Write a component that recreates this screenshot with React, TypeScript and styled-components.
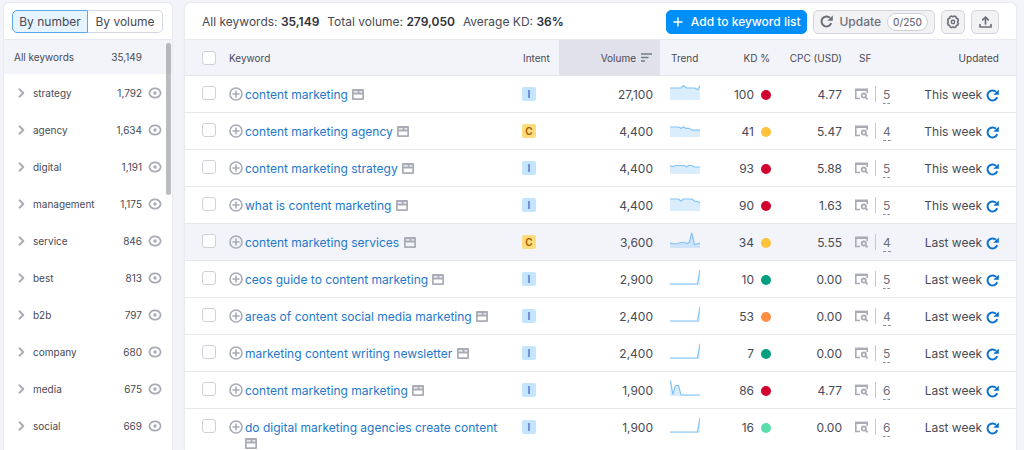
import React from "react";
import styled, { createGlobalStyle } from "styled-components";

const GlobalStyle = createGlobalStyle`
  *, *::before, *::after { box-sizing: border-box; }
  body {
    margin: 0;
    background: #f3f4f9;
    color: #484a54;
    font-family: Inter, "Liberation Sans", sans-serif;
    font-size: 12px;
    line-height: 16px;
  }
  button { font: inherit; color: inherit; cursor: pointer; }
`;

const Page = styled.div`
  display: flex;
  gap: 13px;
  height: 100vh;
  padding: 3px 8px 0 4px;
  overflow: hidden;
`;

const Panel = styled.div`
  background: #fff;
  border-radius: 5px 5px 0 0;
  box-shadow: 0 0 2px rgba(25, 27, 60, 0.16);
  overflow: hidden;
`;

const Sidebar = styled(Panel).attrs({ as: "aside" })`
  position: relative;
  flex: 0 0 168px;
  font-size: 10px;
`;

const Main = styled(Panel).attrs({ as: "main" })`
  flex: 1;
  min-width: 0;
`;

const SwitchBar = styled.div`
  display: flex;
  height: 37px;
  padding: 7px 9px 6px 8px;
  border-bottom: 1px solid #e9eaf1;
`;

const SwitchButton = styled.button<{ $active?: boolean }>`
  flex: 1;
  padding: 0;
  font-size: 12px;
  white-space: nowrap;
  background: ${(p) => (p.$active ? "#e6f4ff" : "#fff")};
  border: 1px solid ${(p) => (p.$active ? "#5aa7ea" : "#d5d7e0")};
  border-radius: ${(p) => (p.$active ? "5px 0 0 5px" : "0 5px 5px 0")};
  ${(p) => !p.$active && "border-left: 0;"}
`;

const GroupTotal = styled.div`
  display: flex;
  justify-content: space-between;
  align-items: center;
  height: 34px;
  padding: 0 30px 0 10px;
  background: #f3f4f9;
`;

const GroupList = styled.ul`
  margin: 0;
  padding: 0;
  list-style: none;
`;

const GroupRow = styled.li`
  display: flex;
  align-items: center;
  height: 37px;
  padding: 0 10px 0 14px;
`;

const GroupName = styled.span`
  flex: 1;
  margin-left: 8px;
`;

const IconButton = styled.button`
  display: inline-flex;
  flex: none;
  padding: 0;
  color: #a9abb6;
  background: none;
  border: 0;
`;

const EyeButton = styled(IconButton)`
  margin-left: 6px;
`;

const RefreshButton = styled(IconButton)`
  color: #0c72d0;
`;

const ScrollThumb = styled.div`
  position: absolute;
  top: 40px;
  right: 1px;
  width: 5px;
  height: 152px;
  border-radius: 3px;
  background: rgba(120, 121, 128, 0.5);
`;

const Toolbar = styled.div`
  display: flex;
  align-items: center;
  height: 37px;
  padding: 1px 17px 0;
  border-bottom: 1px solid #e9eaf1;
`;

const Stats = styled.div`
  display: flex;
  flex: 1;
  gap: 8px;
  white-space: nowrap;
  strong { font-weight: 600; color: #2f3038; }
`;

const Actions = styled.div`
  display: flex;
  gap: 6px;
`;

const ToolButton = styled.button<{ $primary?: boolean }>`
  display: flex;
  align-items: center;
  gap: ${(p) => (p.$primary ? 8 : 6)}px;
  height: 24px;
  padding: 0 6px;
  font-weight: 500;
  white-space: nowrap;
  color: ${(p) => (p.$primary ? "#fff" : "#6d6f7b")};
  background: ${(p) => (p.$primary ? "#008ff8" : "#f2f2f4")};
  border: 1px solid ${(p) => (p.$primary ? "#008ff8" : "#d2d4dc")};
  border-radius: 5px;
`;

const SquareButton = styled(ToolButton)<{ $wide?: boolean }>`
  justify-content: center;
  width: ${(p) => (p.$wide ? 28 : 24)}px;
  padding: 0;
`;

const Quota = styled.span`
  padding: 0 5px;
  font-size: 10px;
  background: #fff;
  border: 1px solid #cfd1da;
  border-radius: 9px;
`;

const Table = styled.table`
  width: 100%;
  table-layout: fixed;
  border-collapse: separate;
  border-spacing: 0;
`;

const Col = styled.col<{ $w?: number }>`
  ${(p) => p.$w && `width: ${p.$w}px;`}
`;

type CellProps = { $right?: boolean; $left?: number; $end?: number; $sorted?: boolean };

const Th = styled.th<CellProps>`
  height: 36px;
  padding: 0 ${(p) => p.$end ?? 8}px 0 ${(p) => p.$left ?? 8}px;
  font-size: 10px;
  font-weight: 400;
  white-space: nowrap;
  text-align: ${(p) => (p.$right ? "right" : "left")};
  background: ${(p) => (p.$sorted ? "#e0e1ea" : "#f3f4f9")};
  border-bottom: 1px solid #e3e4ec;
`;

const Td = styled.td<CellProps>`
  height: 37px;
  padding: 11px ${(p) => p.$end ?? 8}px 9px ${(p) => p.$left ?? 8}px;
  vertical-align: top;
  text-align: ${(p) => (p.$right ? "right" : "left")};
  border-bottom: 1px solid #e6e7ef;
`;

const CheckTd = styled(Td)`
  padding-top: 10px;
`;

const TightTd = styled(Td)`
  padding-top: 8px;
  padding-bottom: 8px;
`;

const Row = styled.tr<{ $hover?: boolean }>`
  background: ${(p) => (p.$hover ? "#f3f4f9" : "#fff")};
`;

const Checkbox = styled.input.attrs({ type: "checkbox" })`
  display: block;
  appearance: none;
  width: 14px;
  height: 14px;
  margin: 0;
  background: #fff;
  border: 1px solid #cfd0da;
  border-radius: 3px;
`;

const KeywordCell = styled.div`
  display: flex;
  align-items: flex-start;
  gap: 2px;
`;

const Keyword = styled.div`
  flex: 1;
  svg { display: inline-block; vertical-align: -1px; color: #a9abb6; }
`;

const KeywordLink = styled.a`
  margin-right: 1px;
  color: #2478cc;
  text-decoration: none;
`;

const Intent = styled.span<{ $kind: string }>`
  display: block;
  width: 14px;
  height: 14px;
  font-size: 10px;
  font-weight: 600;
  line-height: 14px;
  text-align: center;
  border-radius: 2px;
  color: ${(p) => (p.$kind === "C" ? "#a75800" : "#2b7bd0")};
  background: ${(p) => (p.$kind === "C" ? "#fcdc7c" : "#c4e5fe")};
`;

const Inline = styled.div<{ $gap: number; $end?: boolean }>`
  display: flex;
  align-items: center;
  justify-content: ${(p) => (p.$end ? "flex-end" : "flex-start")};
  gap: ${(p) => p.$gap}px;
  white-space: nowrap;
`;

const Dot = styled.span<{ $color: string }>`
  width: 10px;
  height: 10px;
  border-radius: 50%;
  background: ${(p) => p.$color};
`;

const Divider = styled.span`
  width: 1px;
  height: 16px;
  background: #c4c7cf;
`;

const Features = styled.a`
  height: 20px;
  line-height: 22px;
  color: #6c6e79;
  text-decoration: none;
  border-bottom: 1px dashed #8a8e9b;
`;

const Chart = styled.svg`
  display: block;
`;

const Chevron = () => (
  <svg width="7" height="10" viewBox="0 0 7 10" fill="none" stroke="currentColor" strokeWidth="1.9" strokeLinecap="round" strokeLinejoin="round">
    <path d="M1.5 1.3 5.3 5 1.5 8.7" />
  </svg>
);

const Eye = () => (
  <svg width="14" height="12" viewBox="0 0 14 12" fill="none" stroke="currentColor" strokeWidth="1.7">
    <path d="M1.3 6C2 3 4.1 1.4 7 1.4S12 3 12.7 6c-.7 3-2.8 4.6-5.7 4.6S2 9 1.3 6Z" />
    <circle cx="7" cy="6" r="1.7" fill="currentColor" stroke="none" />
  </svg>
);

const PlusCircle = () => (
  <svg width="14" height="14" viewBox="0 0 14 14" fill="none" stroke="currentColor" strokeWidth="1.6">
    <circle cx="7" cy="7" r="6" />
    <path d="M7 4v6M4 7h6" strokeLinecap="round" />
  </svg>
);

const PageIcon = () => (
  <svg width="12" height="11" viewBox="0 0 12 11" fill="currentColor" fillRule="evenodd">
    <path d="M1 0h10a1 1 0 0 1 1 1v9a1 1 0 0 1-1 1H1a1 1 0 0 1-1-1V1a1 1 0 0 1 1-1ZM1.700 5.500v3.800h8.600V5.500ZM1.700 2.200v1.300h4V2.200ZM7.500 2.200v1.300h2.800V2.200Z" />
  </svg>
);

const SerpIcon = () => (
  <svg width="13" height="12" viewBox="0 0 13 12" fill="none" stroke="currentColor">
    <path d="M0 1.8h13" strokeWidth="2.4" />
    <path d="M.8 2v8.500H5M12.200 2v3" strokeWidth="1.6" />
    <circle cx="8.8" cy="7.6" r="2.1" strokeWidth="1.8" />
    <path d="m10.4 9.2 2.2 2.2" strokeWidth="1.8" />
  </svg>
);

const Refresh = () => (
  <svg width="13" height="13" viewBox="0 0 13 13" fill="none" stroke="currentColor" strokeWidth="2">
    <path d="M11.2 8.2A5 5 0 1 1 10 2.8" />
    <path d="M12.8.4v5.4H7.3Z" fill="currentColor" stroke="none" />
  </svg>
);

const Plus = () => (
  <svg width="10" height="10" viewBox="0 0 10 10" fill="none" stroke="currentColor" strokeWidth="1.4" strokeLinecap="round">
    <path d="M5 1v8M1 5h8" />
  </svg>
);

const Gear = () => (
  <svg width="14" height="14" viewBox="0 0 14 14" fill="none" stroke="currentColor" strokeWidth="1.6" strokeLinejoin="round">
    <path d="m5.7 1.1 1.3.7 1.3-.7 1.6.7.4 1.4 1.4.4.7 1.6-.7 1.3v1l.7 1.2-.7 1.4-1.4.4-.4 1.4-1.6.7-1.3-.7-1.3.7-1.6-.7-.4-1.4-1.4-.4-.7-1.6.7-1.3V6.5l-.7-1.3.7-1.6 1.4-.4.4-1.4Z" />
    <circle cx="7" cy="7" r="1.7" strokeWidth="1.4" />
  </svg>
);

const Export = () => (
  <svg width="13" height="12" viewBox="0 0 13 12" fill="none" stroke="currentColor" strokeWidth="1.7" strokeLinecap="round" strokeLinejoin="round">
    <path d="M6.5 8V1.2M3.7 3.8 6.5 1l2.8 2.8M1 8.5V11h11V8.5" />
  </svg>
);

const SortIcon = () => (
  <svg width="11" height="9" viewBox="0 0 11 9" fill="none" stroke="#6d7c85" strokeWidth="1.6">
    <path d="M0 1h11M0 4.5h7.5M0 8h4" />
  </svg>
);

const TrendChart = ({ points }: { points: string }) => (
  <Chart width="30" height="18" viewBox="0 0 30 18" role="img" aria-label="Trend">
    <polygon points={`0,16 ${points} 30,16`} fill="#2f9df4" fillOpacity="0.18" />
    <polyline points={points} fill="none" stroke="#83c3f6" strokeWidth="1.2" />
  </Chart>
);

const spike = "0,15 27.5,15 30,0.5";

const groups: [string, string][] = [
  ["strategy", "1,792"],
  ["agency", "1,634"],
  ["digital", "1,191"],
  ["management", "1,175"],
  ["service", "846"],
  ["best", "813"],
  ["b2b", "797"],
  ["company", "680"],
  ["media", "675"],
  ["social", "669"],
];

const RED = "#d1002f";
const YELLOW = "#fdc23c";
const GREEN = "#009f81";
const ORANGE = "#ff8c43";
const MINT = "#59ddaa";

type KeywordRow = {
  keyword: string;
  intent: string;
  volume: string;
  trend: string;
  kd: number;
  color: string;
  cpc: string;
  sf: number;
  updated: string;
  hover?: boolean;
};

const rows: KeywordRow[] = [
  { keyword: "content marketing", intent: "I", volume: "27,100", trend: "0,4 11,4 13.5,1.5 16.5,4 25,4 27.5,5.7 30,1.5", kd: 100, color: RED, cpc: "4.77", sf: 5, updated: "This week" },
  { keyword: "content marketing agency", intent: "C", volume: "4,400", trend: "0,6 8.5,6 11,7.3 13.5,6 16,7.3 19,7.3 22,9.2 30,9.2", kd: 41, color: YELLOW, cpc: "5.47", sf: 4, updated: "This week" },
  { keyword: "content marketing strategy", intent: "I", volume: "4,400", trend: "0,7.8 3,8.5 5.5,7.5 14,7.5 16.5,8.8 19,7.5 22,7.5 24.5,9 30,9", kd: 93, color: RED, cpc: "5.88", sf: 5, updated: "This week" },
  { keyword: "what is content marketing", intent: "I", volume: "4,400", trend: "0,4 8.5,4 11,6 13.5,4 22,4 24.5,6 27.5,6.5 30,8", kd: 90, color: RED, cpc: "1.63", sf: 5, updated: "This week" },
  { keyword: "content marketing services", intent: "C", volume: "3,600", trend: "0,11.2 5.5,12 11,10.5 14,10.5 17,11.5 19.5,10 21.8,1 24.5,12.5 30,11.2", kd: 34, color: YELLOW, cpc: "5.55", sf: 4, updated: "Last week", hover: true },
  { keyword: "ceos guide to content marketing", intent: "I", volume: "2,900", trend: spike, kd: 10, color: GREEN, cpc: "0.00", sf: 5, updated: "Last week" },
  { keyword: "areas of content social media marketing", intent: "I", volume: "2,400", trend: spike, kd: 53, color: ORANGE, cpc: "0.00", sf: 4, updated: "Last week" },
  { keyword: "marketing content writing newsletter", intent: "I", volume: "2,400", trend: spike, kd: 7, color: GREEN, cpc: "0.00", sf: 5, updated: "Last week" },
  { keyword: "content marketing marketing", intent: "I", volume: "1,900", trend: "0.5,0.5 2.8,14.5 5.5,5.5 8.5,5.5 11,14.8 30,15", kd: 86, color: RED, cpc: "4.77", sf: 6, updated: "Last week" },
  { keyword: "do digital marketing agencies create content", intent: "I", volume: "1,900", trend: spike, kd: 16, color: MINT, cpc: "0.00", sf: 6, updated: "Last week" },
];

export default function App() {
  return (
    <>
      <GlobalStyle />
      <Page>
        <Sidebar>
          <SwitchBar>
            <SwitchButton $active>By number</SwitchButton>
            <SwitchButton>By volume</SwitchButton>
          </SwitchBar>
          <GroupTotal>
            <span>All keywords</span>
            <span>35,149</span>
          </GroupTotal>
          <GroupList>
            {groups.map(([name, count]) => (
              <GroupRow key={name}>
                <IconButton aria-label={`Expand ${name}`}><Chevron /></IconButton>
                <GroupName>{name}</GroupName>
                <span>{count}</span>
                <EyeButton aria-label={`Hide ${name}`}><Eye /></EyeButton>
              </GroupRow>
            ))}
          </GroupList>
          <ScrollThumb />
        </Sidebar>
        <Main>
          <Toolbar>
            <Stats>
              <span>All keywords: <strong>35,149</strong></span>
              <span>Total volume: <strong>279,050</strong></span>
              <span>Average KD: <strong>36%</strong></span>
            </Stats>
            <Actions>
              <ToolButton $primary><Plus />Add to keyword list</ToolButton>
              <ToolButton><Refresh />Update<Quota>0/250</Quota></ToolButton>
              <SquareButton aria-label="Settings"><Gear /></SquareButton>
              <SquareButton $wide aria-label="Export"><Export /></SquareButton>
            </Actions>
          </Toolbar>
          <Table>
            <colgroup>
              <Col $w={36} />
              <Col />
              <Col $w={45} />
              <Col $w={101} />
              <Col $w={48} />
              <Col $w={70} />
              <Col $w={72} />
              <Col $w={50} />
              <Col $w={116} />
            </colgroup>
            <thead>
              <tr>
                <Th $left={17}><Checkbox aria-label="Select all keywords" /></Th>
                <Th>Keyword</Th>
                <Th $left={9}>Intent</Th>
                <Th $right $sorted><Inline $gap={5} $end>Volume<SortIcon /></Inline></Th>
                <Th $left={11}>Trend</Th>
                <Th $right>KD %</Th>
                <Th $right>CPC (USD)</Th>
                <Th $left={9}>SF</Th>
                <Th $right $end={17}>Updated</Th>
              </tr>
            </thead>
            <tbody>
              {rows.map((r) => (
                <Row key={r.keyword} $hover={r.hover}>
                  <CheckTd $left={17}><Checkbox aria-label={`Select ${r.keyword}`} /></CheckTd>
                  <Td>
                    <KeywordCell>
                      <IconButton aria-label={`Add ${r.keyword}`}><PlusCircle /></IconButton>
                      <Keyword><KeywordLink href="#">{r.keyword}</KeywordLink> <PageIcon /></Keyword>
                    </KeywordCell>
                  </Td>
                  <Td><Intent $kind={r.intent}>{r.intent}</Intent></Td>
                  <Td $right $end={7}>{r.volume}</Td>
                  <TightTd $left={10}><TrendChart points={r.trend} /></TightTd>
                  <Td $right $end={7}><Inline $gap={7} $end>{r.kd}<Dot $color={r.color} /></Inline></Td>
                  <Td $right>{r.cpc}</Td>
                  <TightTd $left={5} $end={0}>
                    <Inline $gap={7}>
                      <IconButton aria-label={`View results for ${r.keyword}`}><SerpIcon /></IconButton>
                      <Divider />
                      <Features href="#">{r.sf}</Features>
                    </Inline>
                  </TightTd>
                  <Td $right $end={17}>
                    <Inline $gap={4} $end>
                      {r.updated}
                      <RefreshButton aria-label={`Refresh ${r.keyword}`}><Refresh /></RefreshButton>
                    </Inline>
                  </Td>
                </Row>
              ))}
            </tbody>
          </Table>
        </Main>
      </Page>
    </>
  );
}
